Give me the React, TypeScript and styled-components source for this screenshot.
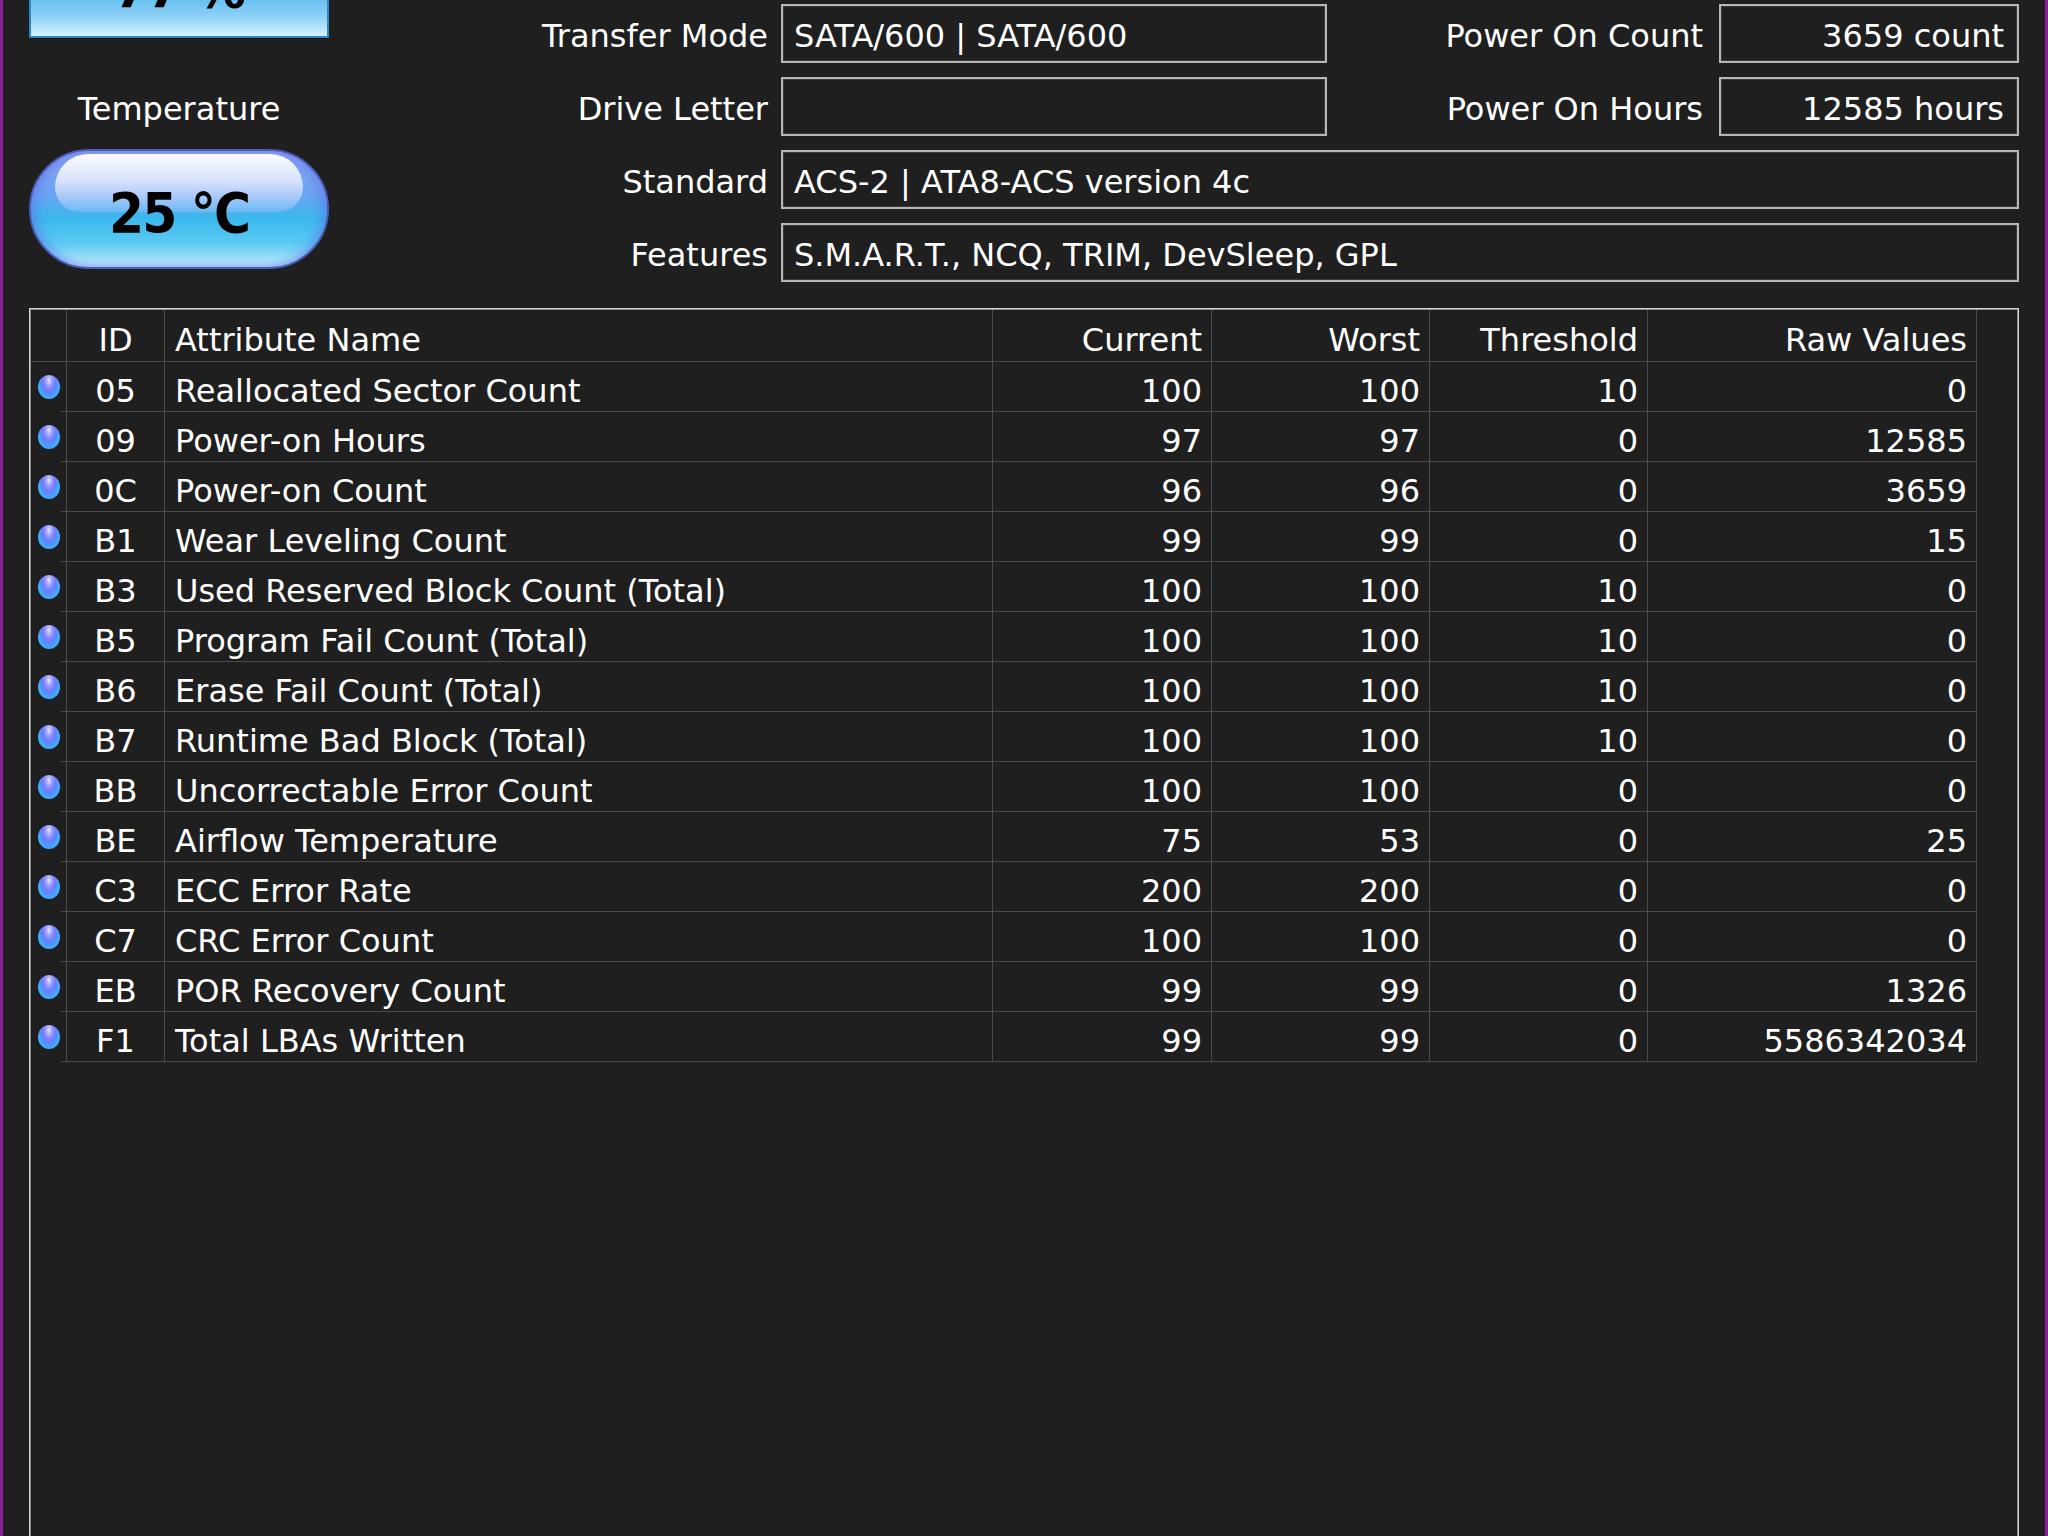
import React from "react";
import styled, { createGlobalStyle } from "styled-components";

const Global = createGlobalStyle`
  html, body { margin: 0; padding: 0; background: #1f1f1f; }
  body { overflow: hidden; }
  #root { width: 2048px; height: 1536px; }
`;

const FONT = `"DejaVu Sans", "Liberation Sans", sans-serif`;

const Window = styled.div`
  box-sizing: border-box;
  width: 2048px;
  height: 1536px;
  overflow: hidden;
  background: #1f1f1f;
  border-left: 3px solid #8d1c9e;
  border-right: 3px solid #8d1c9e;
  padding: 4px 26px 0 26px;
  display: flex;
  flex-direction: column;
  font-family: ${FONT};
  color: #ffffff;
  font-size: 32px;
`;

const Top = styled.div`
  display: grid;
  grid-template-columns: 300px 452px 546px 392px 300px;
  grid-template-rows: repeat(4, 59px);
  row-gap: 14px;
`;

const LeftPanel = styled.div`
  grid-column: 1;
  grid-row: 1 / -1;
  display: flex;
  flex-direction: column;
  align-items: stretch;
`;

const HealthBox = styled.div`
  box-sizing: border-box;
  height: 90px;
  margin-top: -56px;
  border: 2px solid #2d88c8;
  background: linear-gradient(180deg, #36a6ea 0%, #4fb4ee 45%, #8fd2f6 78%, #d6f3ff 100%);
  display: flex;
  align-items: center;
  justify-content: center;
  padding-bottom: 10px;
  box-shadow: 0 1px 0 #0f0f0f;
`;

const BigValue = styled.span`
  font-family: "DejaVu Sans Condensed", "DejaVu Sans", sans-serif;
  font-stretch: condensed;
  font-weight: bold;
  font-size: 56px;
  letter-spacing: -2px;
  color: #000;
  line-height: 1;
  position: relative;
`;

const TempLabel = styled.div`
  margin-top: 51px;
  height: 40px;
  line-height: 40px;
  text-align: center;
`;

const TempPill = styled.div`
  position: relative;
  box-sizing: border-box;
  margin-top: 20px;
  height: 120px;
  border-radius: 60px;
  border: 2px solid #4a5cb8;
  background: linear-gradient(180deg, #8ea6f4 0%, #6aa4f2 38%, #3ab8ee 58%, #5ccaf2 80%, #c6efff 100%);
  box-shadow: inset 6px 0 10px rgba(100, 110, 235, 0.45), inset -6px 0 10px rgba(100, 110, 235, 0.45);
  display: flex;
  align-items: center;
  justify-content: center;
  padding-top: 8px;
  overflow: hidden;
  &::before {
    content: "";
    position: absolute;
    left: 24px;
    right: 24px;
    top: 3px;
    height: 58px;
    border-radius: 40px 40px 30px 30px;
    background: linear-gradient(180deg, rgba(255,255,255,0.97) 0%, rgba(240,242,255,0.8) 45%, rgba(200,210,255,0.25) 100%);
  }
`;

const Label = styled.div<{ $pad: number }>`
  display: flex;
  align-items: center;
  justify-content: flex-end;
  padding-right: ${(p) => p.$pad}px;
  padding-top: 4px;
  white-space: nowrap;
`;

const Field = styled.div<{ $right?: boolean; $span?: boolean }>`
  box-sizing: border-box;
  border: 2px solid #b6b6b6;
  box-shadow: inset 0 0 0 1px #3a3a3a;
  display: flex;
  align-items: center;
  justify-content: ${(p) => (p.$right ? "flex-end" : "flex-start")};
  padding: 4px ${(p) => (p.$right ? 13 : 11)}px 0 11px;
  white-space: nowrap;
  overflow: hidden;
  ${(p) => (p.$span ? "grid-column: 3 / 6;" : "")}
`;

const Table = styled.div`
  box-sizing: border-box;
  margin-top: 26px;
  flex: 1;
  margin-bottom: -20px;
  border: 1px solid #d4d4d4;
  box-shadow: inset 0 0 0 1px #8a8a8a;
  padding: 1px;
`;

const COLS = "36px 98px 828px 219px 218px 218px 329px";

const HeaderRow = styled.div`
  display: grid;
  grid-template-columns: ${COLS};
  height: 52px;
  box-sizing: border-box;
  border-bottom: 1px solid #4a4a4a;
  width: 1946px;
`;

const Row = styled.div`
  display: grid;
  grid-template-columns: ${COLS};
  height: 50px;
  box-sizing: border-box;
  width: 1946px;
  background: linear-gradient(#4a4a4a, #4a4a4a) no-repeat right bottom / calc(100% - 30px) 1px;
  padding-bottom: 1px;
`;

const Cell = styled.div<{ $align: "left" | "center" | "right"; $icon?: boolean }>`
  display: flex;
  align-items: center;
  padding-top: ${(p) => (p.$icon ? 0 : 8)}px;
  justify-content: ${(p) => (p.$align === "left" ? "flex-start" : p.$align === "center" ? "center" : "flex-end")};
  padding-left: ${(p) => (p.$align === "left" ? 10 : 0)}px;
  padding-right: ${(p) => (p.$align === "right" ? 9 : 0)}px;
  border-right: 1px solid #4a4a4a;
  white-space: nowrap;
  overflow: hidden;
`;

const Bullet = styled.span`
  width: 22px;
  height: 24px;
  border-radius: 50%;
  background: radial-gradient(ellipse at 50% 22%, #e6e6ff 0%, #9a9aff 22%, #6c7cff 42%, #3aaeff 70%, #52dcff 100%);
`;

const rows: [string, string, string, string, string, string][] = [
  ["05", "Reallocated Sector Count", "100", "100", "10", "0"],
  ["09", "Power-on Hours", "97", "97", "0", "12585"],
  ["0C", "Power-on Count", "96", "96", "0", "3659"],
  ["B1", "Wear Leveling Count", "99", "99", "0", "15"],
  ["B3", "Used Reserved Block Count (Total)", "100", "100", "10", "0"],
  ["B5", "Program Fail Count (Total)", "100", "100", "10", "0"],
  ["B6", "Erase Fail Count (Total)", "100", "100", "10", "0"],
  ["B7", "Runtime Bad Block (Total)", "100", "100", "10", "0"],
  ["BB", "Uncorrectable Error Count", "100", "100", "0", "0"],
  ["BE", "Airflow Temperature", "75", "53", "0", "25"],
  ["C3", "ECC Error Rate", "200", "200", "0", "0"],
  ["C7", "CRC Error Count", "100", "100", "0", "0"],
  ["EB", "POR Recovery Count", "99", "99", "0", "1326"],
  ["F1", "Total LBAs Written", "99", "99", "0", "5586342034"],
];

export default function App() {
  return (
    <>
      <Global />
      <Window>
        <Top>
          <LeftPanel>
            <HealthBox>
              <BigValue>77 %</BigValue>
            </HealthBox>
            <TempLabel>Temperature</TempLabel>
            <TempPill>
              <BigValue>25 °C</BigValue>
            </TempPill>
          </LeftPanel>
          <Label $pad={13}>Transfer Mode</Label>
          <Field>SATA/600 | SATA/600</Field>
          <Label $pad={16}>Power On Count</Label>
          <Field $right>3659 count</Field>
          <Label $pad={13}>Drive Letter</Label>
          <Field></Field>
          <Label $pad={16}>Power On Hours</Label>
          <Field $right>12585 hours</Field>
          <Label $pad={13}>Standard</Label>
          <Field $span>ACS-2 | ATA8-ACS version 4c</Field>
          <Label $pad={13}>Features</Label>
          <Field $span>S.M.A.R.T., NCQ, TRIM, DevSleep, GPL</Field>
        </Top>
        <Table>
          <HeaderRow>
            <Cell $align="center" $icon></Cell>
            <Cell $align="center">ID</Cell>
            <Cell $align="left">Attribute Name</Cell>
            <Cell $align="right">Current</Cell>
            <Cell $align="right">Worst</Cell>
            <Cell $align="right">Threshold</Cell>
            <Cell $align="right">Raw Values</Cell>
          </HeaderRow>
          {rows.map((r) => (
            <Row key={r[0]}>
              <Cell $align="center" $icon>
                <Bullet />
              </Cell>
              <Cell $align="center">{r[0]}</Cell>
              <Cell $align="left">{r[1]}</Cell>
              <Cell $align="right">{r[2]}</Cell>
              <Cell $align="right">{r[3]}</Cell>
              <Cell $align="right">{r[4]}</Cell>
              <Cell $align="right">{r[5]}</Cell>
            </Row>
          ))}
        </Table>
      </Window>
    </>
  );
}
